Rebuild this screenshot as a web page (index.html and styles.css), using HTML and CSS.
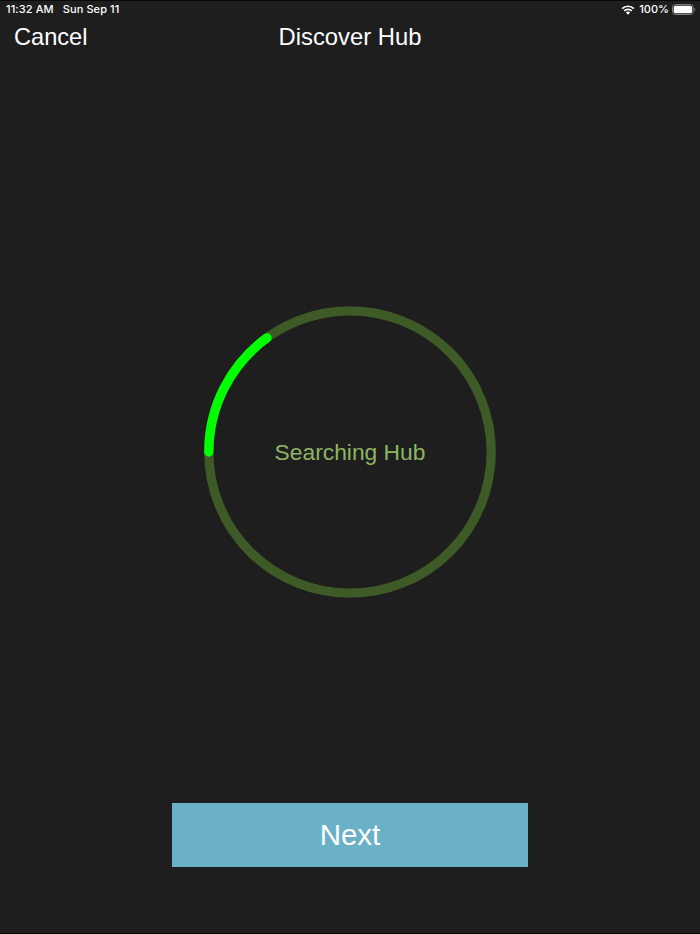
FILE: index.html
```html
<!DOCTYPE html>
<html lang="en">

<head>
    <meta charset="UTF-8">
    <title>Discover Hub</title>
    <link rel="stylesheet" href="styles.css">
</head>

<body>
    <div class="status">
        <span class="time">11:32 AM</span>
        <span class="date">Sun Sep 11</span>
        <svg class="wifi" width="14" height="10" viewBox="0 0 14 10">
            <path d="M1.1 3.7a8.3 8.3 0 0 1 11.8 0M3.2 5.9a5.4 5.4 0 0 1 7.6 0" fill="none" stroke="#fff" stroke-width="1.7" />
            <path d="M7 9.7L4.9 7.6a2.9 2.9 0 0 1 4.2 0z" fill="#fff" />
        </svg>
        <span class="percent">100%</span>
        <svg class="battery" width="24" height="11" viewBox="0 0 24 11">
            <rect x="0.5" y="0.5" width="20.8" height="10" rx="2.8" fill="none" stroke="#7c7c7c" />
            <rect x="1.7" y="1.7" width="18.4" height="7.6" rx="1.7" fill="#fff" />
            <path d="M22.4 3.8c1.3.5 1.3 2.9 0 3.4z" fill="#7c7c7c" />
        </svg>
    </div>

    <div class="nav">
        <div class="cancel">Cancel</div>
        <h1>Discover Hub</h1>
    </div>

    <div class="content">
        <div class="progress">
            <svg class="ring" width="292" height="292" viewBox="0 0 292 292">
                <circle class="track" cx="146" cy="146" r="141.2" />
                <path class="arc" d="M4.8 146A141.2 141.2 0 0 1 63 31.8" />
            </svg>
            <span class="label">Searching Hub</span>
        </div>
    </div>

    <button class="next">Next</button>
</body>

</html>
```

FILE: styles.css
```css
* {
    box-sizing: border-box;
}

html,
body {
    height: 100%;
    margin: 0;
}

body {
    display: flex;
    flex-flow: column;
    align-items: center;
    background-color: #1e1e1e;
    border-top: 1px solid #080808;
    border-bottom: 1px solid #080808;
    color: #fff;
    font-family: "Liberation Sans", Arial, sans-serif;
}

.status {
    display: flex;
    align-items: center;
    width: 100%;
    height: 17px;
    padding: 0 4px 0 6px;
    font-family: Inter, sans-serif;
    font-size: 11px;
    font-weight: 500;
    letter-spacing: 0.1px;
    line-height: 17px;
}

.date {
    margin-left: 9px;
}

.wifi {
    margin-left: auto;
}

.percent {
    margin: 0 3px 0 4px;
    letter-spacing: 0;
}

.nav {
    display: grid;
    grid-template-columns: 1fr auto 1fr;
    width: 100%;
    height: 38px;
    padding: 0 14px;
    font-size: 23.6px;
    line-height: 38px;
}

.nav h1 {
    margin: 0;
    font-size: 23.8px;
    font-weight: normal;
}

.content {
    flex: 1;
    display: flex;
    justify-content: center;
    padding-top: 250px;
}

.progress {
    display: grid;
    place-items: center;
    width: 292px;
    height: 292px;
}

.ring,
.label {
    grid-area: 1 / 1;
}

.track {
    fill: none;
    stroke: #3e5a27;
    stroke-width: 9.3;
}

.arc {
    fill: none;
    stroke: #00ff00;
    stroke-width: 9.3;
    stroke-linecap: round;
}

.label {
    color: #8db563;
    font-size: 22.8px;
}

.next {
    width: 356px;
    height: 64px;
    margin-bottom: 66px;
    padding: 0;
    border: none;
    background-color: #6ab0c7;
    color: #fff;
    font-family: inherit;
    font-size: 29.5px;
}
```
